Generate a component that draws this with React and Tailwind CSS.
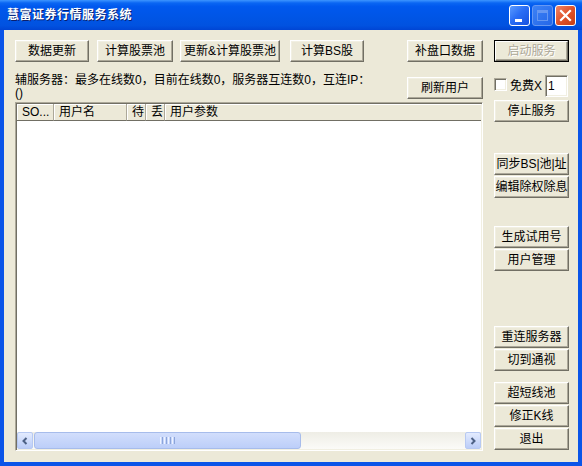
import React from 'react';

const FONT = "font-['Liberation_Sans','Noto_Sans_CJK_SC',sans-serif]";

function Btn({ children, className = '' }) {
  return (
    <button
      type="button"
      className={`box-border flex h-[22px] shrink-0 items-center justify-center whitespace-nowrap border border-t-white border-l-white border-r-[#716F64] border-b-[#716F64] bg-[#ECE9D8] p-0 text-[12px] leading-none text-black shadow-[inset_-1px_-1px_0_#ACA899,inset_1px_1px_0_#F1EFE2] ${className}`}
    >
      {children}
    </button>
  );
}

function TitleButtons() {
  return (
    <div className="flex items-center gap-[2px] pr-[6px]">
      <div className="relative h-[21px] w-[21px] rounded-[3px] border border-white bg-[linear-gradient(135deg,#5A9BFF_0%,#2A6EF5_45%,#1551E0_100%)]">
        <div className="absolute left-[5px] top-[13px] h-[3px] w-[7px] bg-white" />
      </div>
      <div className="relative h-[21px] w-[21px] rounded-[3px] border border-[#7FA8F5] bg-[linear-gradient(135deg,#4C8DF8_0%,#2E6CEB_100%)] opacity-80">
        <div className="absolute left-[4px] top-[4px] h-[11px] w-[11px] border border-t-[3px] border-[#7FA8F5]" />
      </div>
      <div className="relative h-[21px] w-[21px] rounded-[3px] border border-white bg-[linear-gradient(135deg,#F0866A_0%,#E0522A_50%,#C73E14_100%)]">
        <svg viewBox="0 0 19 19" className="absolute inset-0 h-full w-full">
          <path d="M5 5 L14 14 M14 5 L5 14" stroke="#fff" strokeWidth="2.2" strokeLinecap="square" />
        </svg>
      </div>
    </div>
  );
}

function HeaderCell({ children, className = '' }) {
  return (
    <div
      className={`box-border flex h-full items-center overflow-hidden whitespace-nowrap border-r border-b border-r-[#ACA899] border-b-[#716F64] bg-[#ECE9D8] pl-[5px] text-[12px] shadow-[inset_1px_1px_0_#fff] ${className}`}
    >
      {children}
    </div>
  );
}

function Arrow({ dir }) {
  return (
    <div className="box-border flex h-[17px] w-[16px] shrink-0 items-center justify-center rounded-[2px] border border-[#B7C9F2] bg-[linear-gradient(to_bottom,#E3EBFE,#BBCDF8)]">
      <svg viewBox="0 0 8 8" className="h-[8px] w-[8px]">
        <path
          d={dir === 'left' ? 'M5.5 1 L2.5 4 L5.5 7' : 'M2.5 1 L5.5 4 L2.5 7'}
          fill="none"
          stroke="#4D6185"
          strokeWidth="2"
        />
      </svg>
    </div>
  );
}

function UserList() {
  return (
    <div className="box-border flex h-[349px] flex-col border border-t-[#ACA899] border-l-[#ACA899] border-r-white border-b-white bg-white shadow-[inset_1px_1px_0_#716F64,inset_-1px_-1px_0_#F1EFE2] p-[1px]">
      <div className="flex h-[17px] shrink-0">
        <HeaderCell className="w-[37px]">SO...</HeaderCell>
        <HeaderCell className="w-[73px]">用户名</HeaderCell>
        <HeaderCell className="w-[19px] pl-[4px]">待</HeaderCell>
        <HeaderCell className="w-[19px] pl-[3px]">丢</HeaderCell>
        <HeaderCell className="flex-1 border-r-0">用户参数</HeaderCell>
      </div>
      <div className="flex-1 bg-white" />
      <div className="flex h-[17px] shrink-0 bg-[linear-gradient(to_bottom,#EEEDE5,#FBFBF8)]">
        <Arrow dir="left" />
        <div className="flex flex-1 px-[1px]">
          <div className="box-border flex h-[17px] w-[267px] items-center justify-center rounded-[3px] border border-[#A7BCEB] bg-[linear-gradient(to_bottom,#D2DEFC,#BCCEF9)]">
            <div className="flex gap-[1px]">
              <div className="h-[7px] w-[1px] bg-[#EEF3FF]" />
              <div className="h-[7px] w-[1px] bg-[#8CA5DA]" />
              <div className="h-[7px] w-[1px] bg-[#EEF3FF]" />
              <div className="h-[7px] w-[1px] bg-[#8CA5DA]" />
              <div className="h-[7px] w-[1px] bg-[#EEF3FF]" />
              <div className="h-[7px] w-[1px] bg-[#8CA5DA]" />
              <div className="h-[7px] w-[1px] bg-[#EEF3FF]" />
              <div className="h-[7px] w-[1px] bg-[#8CA5DA]" />
            </div>
          </div>
        </div>
        <Arrow dir="right" />
      </div>
    </div>
  );
}

export default function App() {
  return (
    <div className={`flex h-[466px] w-[582px] flex-col bg-[#0A54E8] ${FONT}`}>
      <div className="flex h-[30px] shrink-0 items-center justify-between bg-[linear-gradient(to_bottom,#3D95FF_0%,#0A66F3_10%,#0058EE_22%,#0055E5_60%,#0152E0_85%,#0045D4_100%)] pl-[7px]">
        <span className="text-[12px] font-bold tracking-[0.5px] text-white [text-shadow:1px_1px_0_#0A1F6E]">
          慧富证券行情服务系统
        </span>
        <TitleButtons />
      </div>

      <div className="flex flex-1 border-x-4 border-b-4 border-x-[#0A54E8] border-b-[#0A54E8] bg-[#ECE9D8] pt-[10px] pl-[11px] pr-[9px] text-black">
        <div className="flex w-[468px] flex-col">
          <div className="flex h-[22px]">
            <Btn className="w-[74px]">数据更新</Btn>
            <Btn className="ml-[8px] w-[76px]">计算股票池</Btn>
            <Btn className="ml-[7px] w-[100px]">更新&amp;计算股票池</Btn>
            <Btn className="ml-[10px] w-[74px]">计算BS股</Btn>
            <Btn className="ml-auto w-[76px]">补盘口数据</Btn>
          </div>

          <div className="flex h-[40px]">
            <div className="mt-[12px] text-[12px] leading-[13px]">
              <div className="whitespace-nowrap">辅服务器：最多在线数0，目前在线数0，服务器互连数0，互连IP：</div>
              <div>()</div>
            </div>
            <Btn className="ml-auto mt-[15px] h-[21px] w-[76px]">刷新用户</Btn>
          </div>

          <UserList />
        </div>

        <div className="ml-[11px] flex w-[75px] flex-col">
          <div className="box-border h-[22px] border border-black">
            <button
              type="button"
              className="box-border flex h-full w-full items-center justify-center border border-t-white border-l-white border-r-[#716F64] border-b-[#716F64] bg-[#ECE9D8] p-0 text-[12px] leading-none text-[#ACA899] shadow-[inset_-1px_-1px_0_#ACA899] [text-shadow:1px_1px_0_#fff]"
            >
              启动服务
            </button>
          </div>

          <div className="mt-[13px] flex h-[22px] items-start">
            <div className="mt-[3px] box-border h-[13px] w-[13px] border border-t-[#ACA899] border-l-[#ACA899] border-r-white border-b-white bg-white shadow-[inset_1px_1px_0_#716F64,inset_-1px_-1px_0_#F1EFE2]" />
            <span className="ml-[3px] mt-[4px] text-[12px] leading-[14px]">免费X</span>
            <div className="ml-auto mr-[1px] box-border flex h-[22px] w-[23px] items-center border border-t-[#ACA899] border-l-[#ACA899] border-r-white border-b-white bg-white pl-[2px] text-[12px] shadow-[inset_1px_1px_0_#716F64,inset_-1px_-1px_0_#F1EFE2]">
              1
            </div>
          </div>

          <Btn className="mt-[3px] w-full">停止服务</Btn>

          <Btn className="mt-[31px] w-full">同步BS|池|址</Btn>
          <Btn className="mt-[1px] w-full">编辑除权除息</Btn>

          <Btn className="mt-[28px] w-full">生成试用号</Btn>
          <Btn className="mt-[1px] w-full">用户管理</Btn>

          <Btn className="mt-[55px] w-full">重连服务器</Btn>
          <Btn className="mt-[1px] w-full">切到通视</Btn>

          <Btn className="mt-[11px] w-full">超短线池</Btn>
          <Btn className="mt-[1px] w-full">修正K线</Btn>
          <Btn className="mt-[1px] w-full">退出</Btn>
        </div>
      </div>
    </div>
  );
}
